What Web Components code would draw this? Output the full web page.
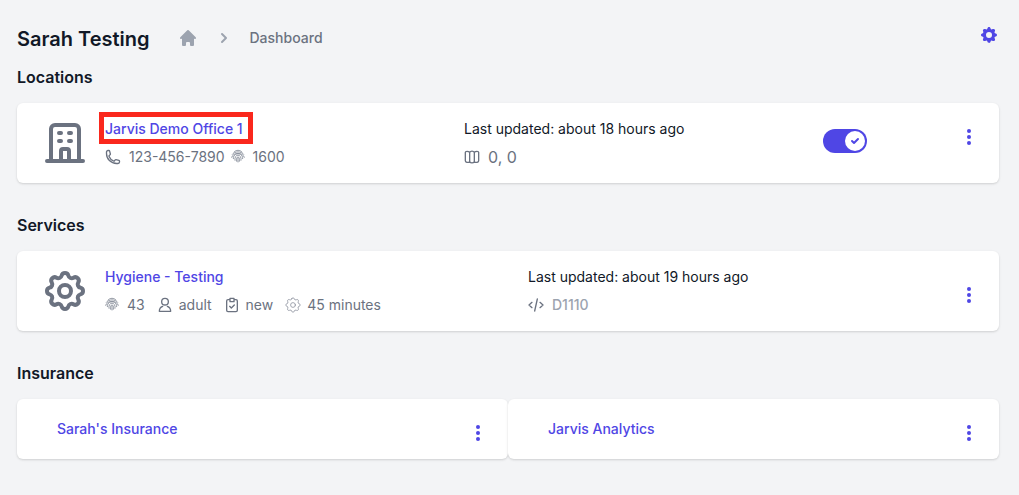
<!DOCTYPE html>
<html lang="en">
<head>
<meta charset="utf-8">
<meta name="viewport" content="width=device-width, initial-scale=1">
<title>Dashboard</title>
<style>
    body {
        margin: 0;
        background-color: #f3f4f6;
        color: #111827;
        font-family: Inter, "Liberation Sans", sans-serif;
        font-size: 14px;
        line-height: 20px;
    }
</style>
</head>
<body>
<practice-dashboard></practice-dashboard>

<script>
const outline = (d, width = 2, box = "0 0 24 24") =>
    `<svg viewBox="${box}" fill="none" stroke="currentColor" stroke-width="${width}" stroke-linecap="round" stroke-linejoin="round">${d}</svg>`;
const solid = (d) =>
    `<svg viewBox="0 0 20 20" fill="currentColor"><path fill-rule="evenodd" clip-rule="evenodd" d="${d}"/></svg>`;

const COG = `<path d="M10.325 4.317c.426-1.756 2.924-1.756 3.35 0a1.724 1.724 0 002.573 1.066c1.543-.94 3.31.826 2.37 2.37a1.724 1.724 0 001.065 2.572c1.756.426 1.756 2.924 0 3.35a1.724 1.724 0 00-1.066 2.573c.94 1.543-.826 3.31-2.37 2.37a1.724 1.724 0 00-2.572 1.065c-.426 1.756-2.924 1.756-3.35 0a1.724 1.724 0 00-2.573-1.066c-1.543.94-3.31-.826-2.37-2.37a1.724 1.724 0 00-1.065-2.572c-1.756-.426-1.756-2.924 0-3.35a1.724 1.724 0 001.066-2.573c-.94-1.543.826-3.31 2.37-2.37.996.608 2.296.07 2.572-1.065z"/><path d="M15 12a3 3 0 11-6 0 3 3 0 016 0z"/>`;

const ICONS = {
    home: solid("M10.707 2.293a1 1 0 00-1.414 0l-7 7a1 1 0 001.414 1.414L4 10.414V17a1 1 0 001 1h2a1 1 0 001-1v-2a1 1 0 011-1h2a1 1 0 011 1v2a1 1 0 001 1h2a1 1 0 001-1v-6.586l.293.293a1 1 0 001.414-1.414l-7-7z"),
    chevron: solid("M7.293 14.707a1 1 0 010-1.414L10.586 10 7.293 6.707a1 1 0 011.414-1.414l4 4a1 1 0 010 1.414l-4 4a1 1 0 01-1.414 0z"),
    settings: solid("M11.49 3.17c-.38-1.56-2.6-1.56-2.98 0a1.532 1.532 0 01-2.286.948c-1.372-.836-2.942.734-2.106 2.106.54.886.061 2.042-.947 2.287-1.561.379-1.561 2.6 0 2.978a1.532 1.532 0 01.947 2.287c-.836 1.372.734 2.942 2.106 2.106a1.532 1.532 0 012.287.947c.379 1.561 2.6 1.561 2.978 0a1.533 1.533 0 012.287-.947c1.372.836 2.942-.734 2.106-2.106a1.533 1.533 0 01.947-2.287c1.561-.379 1.561-2.6 0-2.978a1.532 1.532 0 01-.947-2.287c.836-1.372-.734-2.942-2.106-2.106a1.532 1.532 0 01-2.287-.947zM10 13a3 3 0 100-6 3 3 0 000 6z"),
    office: outline(`<path d="M19 21V5a2 2 0 00-2-2H7a2 2 0 00-2 2v16m14 0h2m-2 0h-5m-9 0H3m2 0h5M9 7h1m-1 4h1m4-4h1m-1 4h1m-5 10v-5a1 1 0 011-1h2a1 1 0 011 1v5m-4 0h4"/>`),
    cog: outline(COG),
    "cog-thin": outline(COG, 1, "2 2 20 20"),
    phone: outline(`<path d="M2.25 6.75c0 8.284 6.716 15 15 15h2.25a2.25 2.25 0 002.25-2.25v-1.372c0-.516-.351-.966-.852-1.091l-4.423-1.106c-.44-.11-.902.055-1.173.417l-.97 1.293c-.282.376-.769.542-1.21.38a12.035 12.035 0 01-7.143-7.143c-.162-.441.004-.928.38-1.21l1.293-.97c.363-.271.527-.734.417-1.173L6.963 3.102a1.125 1.125 0 00-1.091-.852H4.5A2.25 2.25 0 002.25 4.5z"/>`),
    fingerprint: outline(`<path d="M4.500 4.500C8 1 13 1 16.500 4.500M2 8C5 3 16 3 19 8M1 12.500C2.500 4.500 18.500 4.500 20 12.500M3.500 14.500c-1-10 15-10 14 0M6 17c-2-10.500 11-10.500 9 0M8.500 18.500c-2-9 6-9 4 0M10.500 13.500v6"/>`, 1.4),
    map: outline(`<path d="M8.500 5v14M15.500 5v14M8.500 5C6.500 3 2 3 2 5v12.500c0 2.500 4 3.500 6.500 1.500 1.500 2.500 5.500 2.500 7 0 2.500 2 6.500 1 6.500-1.500V5c0-2-4.500-2-6.500 0-1.500-2.500-5.500-2.500-7 0z"/>`),
    code: outline(`<path d="M6 8l-4.500 4L6 16M18 8l4.500 4-4.500 4M14 3l-4 18"/>`),
    user: outline(`<circle cx="12" cy="7" r="5"/><path d="M8.500 14C5.500 15 3.500 18 3.500 21.500h17c0-3.500-2-6.500-5-7.500"/>`),
    clipboard: outline(`<path d="M9 4H6a2 2 0 00-2 2v14a2 2 0 002 2h12a2 2 0 002-2V6a2 2 0 00-2-2h-3M9 2h6v5H9zM8.500 14l2.500 2.500 4.500-4.500"/>`),
    dots: `<svg viewBox="0 0 20 20" fill="currentColor"><circle cx="10" cy="4" r="2"/><circle cx="10" cy="10" r="2"/><circle cx="10" cy="16" r="2"/></svg>`,
    check: `<svg viewBox="0 0 12 12" fill="currentColor"><path d="M3.707 5.293a1 1 0 00-1.414 1.414l1.414-1.414zM5 8l-.707.707a1 1 0 001.414 0L5 8zm4.707-3.293a1 1 0 00-1.414-1.414l1.414 1.414zm-7.414 2l2 2 1.414-1.414-2-2-1.414 1.414zm3.414 2l4-4-1.414-1.414-4 4 1.414 1.414z"/></svg>`
};

class UiIcon extends HTMLElement {
    constructor() {
        super();
        this.attachShadow({ mode: "open" });
    }
    connectedCallback() {
        this.shadowRoot.innerHTML = `
        <style>
            :host {
                display: block;
                flex: none;
                width: 20px;
                height: 20px;
            }
            svg {
                display: block;
                width: 100%;
                height: 100%;
            }
        </style>
        ${ICONS[this.getAttribute("name")]}
        `;
    }
}

class PageHeader extends HTMLElement {
    constructor() {
        super();
        this.attachShadow({ mode: "open" });
    }
    connectedCallback() {
        this.shadowRoot.innerHTML = `
        <style>
            :host {
                display: flex;
                align-items: flex-start;
                justify-content: space-between;
            }
            .left, nav {
                display: flex;
                align-items: center;
            }
            .left {
                gap: 28px;
            }
            nav {
                gap: 16px;
                padding-bottom: 2px;
                color: #9ca3af;
            }
            h1 {
                margin: 0;
                font-size: 20px;
                line-height: 28px;
                font-weight: 600;
            }
            a {
                color: inherit;
                font-weight: 500;
                text-decoration: none;
            }
            .current {
                color: #6b7280;
            }
            button {
                padding: 0;
                border: 0;
                background: none;
                color: #4f46e5;
                cursor: pointer;
            }
        </style>
        <div class="left">
            <h1><slot></slot></h1>
            <nav aria-label="Breadcrumb">
                <a href="#" aria-label="Home"><ui-icon name="home"></ui-icon></a>
                <ui-icon name="chevron"></ui-icon>
                <a class="current" href="#">${this.getAttribute("page")}</a>
            </nav>
        </div>
        <button type="button" aria-label="Settings"><ui-icon name="settings"></ui-icon></button>
        `;
    }
}

class PageSection extends HTMLElement {
    constructor() {
        super();
        this.attachShadow({ mode: "open" });
    }
    connectedCallback() {
        this.shadowRoot.innerHTML = `
        <style>
            :host {
                display: block;
            }
            h2 {
                margin: 0 0 14px;
                font-size: 16px;
                line-height: 24px;
                font-weight: 600;
            }
            .cards {
                display: grid;
                grid-auto-flow: column;
                grid-auto-columns: 1fr;
            }
        </style>
        <h2>${this.getAttribute("heading")}</h2>
        <div class="cards"><slot></slot></div>
        `;
    }
}

// Row card: optional icon, slotted body, optional control, menu button
class ItemCard extends HTMLElement {
    constructor() {
        super();
        this.attachShadow({ mode: "open" });
    }
    connectedCallback() {
        const icon = this.getAttribute("icon");
        this.shadowRoot.innerHTML = `
        <style>
            :host {
                display: flex;
                align-items: center;
                padding: 16px 20px 16px 24px;
                border-radius: 6px;
                background-color: white;
                box-shadow: 0 1px 3px rgba(0, 0, 0, 0.1), 0 1px 2px rgba(0, 0, 0, 0.06);
            }
            .icon {
                width: 48px;
                height: 48px;
                margin-right: 16px;
                color: #6b7280;
            }
            .body {
                flex: 1;
                display: grid;
                grid-auto-flow: column;
                grid-auto-columns: minmax(0, 1fr);
                gap: 16px;
            }
            :host(:not([icon])) .body {
                padding: 4px 16px;
            }
            button {
                margin-left: 24px;
                padding: 8px 0 0;
                border: 0;
                background: none;
                color: #4f46e5;
                cursor: pointer;
            }
            :host([menu="top"]) button {
                align-self: flex-start;
            }
        </style>
        ${icon ? `<ui-icon class="icon" name="${icon}"></ui-icon>` : ""}
        <div class="body"><slot></slot></div>
        <slot name="control"></slot>
        <button type="button" aria-label="More options"><ui-icon name="dots"></ui-icon></button>
        `;
    }
}

class ItemLink extends HTMLElement {
    constructor() {
        super();
        this.attachShadow({ mode: "open" });
    }
    connectedCallback() {
        this.shadowRoot.innerHTML = `
        <style>
            :host {
                display: block;
            }
            a {
                position: relative;
                display: inline-block;
                color: #4f46e5;
                font-weight: 500;
                text-decoration: none;
            }
            :host([highlighted]) a::after {
                content: "";
                position: absolute;
                inset: -7px -10px -5px -6px;
                border: 5px solid #fa281d;
            }
        </style>
        <a href="#"><slot></slot></a>
        `;
    }
}

class MetaItem extends HTMLElement {
    constructor() {
        super();
        this.attachShadow({ mode: "open" });
    }
    connectedCallback() {
        this.shadowRoot.innerHTML = `
        <style>
            :host {
                display: flex;
                align-items: center;
                gap: 6px;
                color: #6b7280;
            }
            :host([spaced]) {
                gap: 8px;
            }
            :host([large]) {
                font-size: 16px;
            }
            :host([muted]) {
                color: #9ca3af;
                font-weight: 500;
            }
            ui-icon {
                width: 16px;
                height: 16px;
                color: #6b7280;
            }
            ui-icon[name="fingerprint"], ui-icon[name="cog-thin"] {
                color: #8b919d;
            }
        </style>
        <ui-icon name="${this.getAttribute("icon")}"></ui-icon>
        <span><slot></slot></span>
        `;
    }
}

class ToggleSwitch extends HTMLElement {
    constructor() {
        super();
        this.attachShadow({ mode: "open" });
    }
    connectedCallback() {
        this.shadowRoot.innerHTML = `
        <style>
            :host {
                display: block;
            }
            label {
                position: relative;
                display: block;
                width: 44px;
                height: 24px;
                cursor: pointer;
            }
            input {
                appearance: none;
                display: block;
                width: 100%;
                height: 100%;
                margin: 0;
                border-radius: 12px;
                background-color: #e5e7eb;
            }
            .knob {
                position: absolute;
                top: 2px;
                left: 2px;
                display: grid;
                place-items: center;
                width: 20px;
                height: 20px;
                border-radius: 50%;
                background-color: white;
                color: #4f46e5;
                pointer-events: none;
            }
            .knob ui-icon {
                width: 12px;
                height: 12px;
            }
            input:checked {
                background-color: #4f46e5;
            }
            input:checked + .knob {
                left: 22px;
            }
        </style>
        <label>
            <input type="checkbox" role="switch" aria-label="${this.getAttribute("label")}" checked>
            <span class="knob"><ui-icon name="check"></ui-icon></span>
        </label>
        `;
    }
}

class PracticeDashboard extends HTMLElement {
    constructor() {
        super();
        this.attachShadow({ mode: "open" });
    }
    connectedCallback() {
        this.shadowRoot.innerHTML = `
        <style>
            :host {
                display: block;
                padding: 25px 20px 32px 17px;
            }
            page-section {
                margin-top: 30px;
            }
            page-header + page-section {
                margin-top: 12px;
            }
            .meta {
                display: flex;
                gap: 12px;
                margin-top: 8px;
            }
            .meta.tight {
                gap: 6px;
            }
            toggle-switch {
                width: 112px;
                margin-left: 16px;
                padding-bottom: 4px;
            }
        </style>
        <page-header page="Dashboard">Sarah Testing</page-header>

        <page-section heading="Locations">
            <item-card icon="office" menu="top">
                <div>
                    <item-link highlighted>Jarvis Demo Office 1</item-link>
                    <div class="meta tight">
                        <meta-item icon="phone" spaced>123-456-7890</meta-item>
                        <meta-item icon="fingerprint">1600</meta-item>
                    </div>
                </div>
                <div>
                    <div>Last updated: about 18 hours ago</div>
                    <div class="meta">
                        <meta-item icon="map" spaced large>0, 0</meta-item>
                    </div>
                </div>
                <toggle-switch slot="control" label="Location active"></toggle-switch>
            </item-card>
        </page-section>

        <page-section heading="Services">
            <item-card icon="cog">
                <div>
                    <item-link>Hygiene - Testing</item-link>
                    <div class="meta">
                        <meta-item icon="fingerprint">43</meta-item>
                        <meta-item icon="user">adult</meta-item>
                        <meta-item icon="clipboard">new</meta-item>
                        <meta-item icon="cog-thin">45 minutes</meta-item>
                    </div>
                </div>
                <div>
                    <div>Last updated: about 19 hours ago</div>
                    <div class="meta">
                        <meta-item icon="code" spaced muted>D1110</meta-item>
                    </div>
                </div>
            </item-card>
        </page-section>

        <page-section heading="Insurance">
            <item-card><item-link>Sarah's Insurance</item-link></item-card>
            <item-card><item-link>Jarvis Analytics</item-link></item-card>
        </page-section>
        `;
    }
}

customElements.define("ui-icon", UiIcon);
customElements.define("page-header", PageHeader);
customElements.define("page-section", PageSection);
customElements.define("item-card", ItemCard);
customElements.define("item-link", ItemLink);
customElements.define("meta-item", MetaItem);
customElements.define("toggle-switch", ToggleSwitch);
customElements.define("practice-dashboard", PracticeDashboard);
</script>
</body>
</html>
